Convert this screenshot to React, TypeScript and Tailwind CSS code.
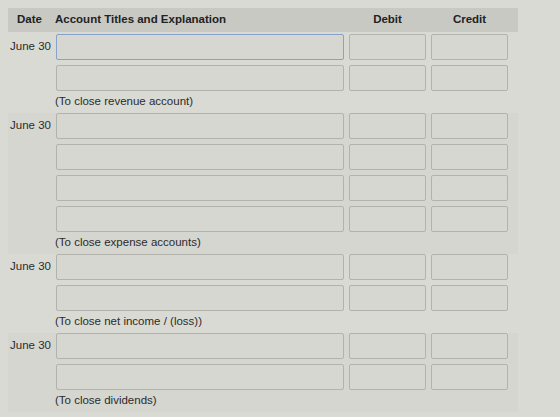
import React from "react";

type Group = {
  lines: number;
  note: string;
};

const groups: Group[] = [
  { lines: 2, note: "(To close revenue account)" },
  { lines: 4, note: "(To close expense accounts)" },
  { lines: 2, note: "(To close net income / (loss))" },
  { lines: 2, note: "(To close dividends)" },
];

const cols = "grid grid-cols-[43px_288px_77px_77px] gap-[5px]";

function Field({ focused }: { focused?: boolean }) {
  return (
    <input
      type="text"
      className={`h-[26px] w-full rounded-[2px] border bg-[#d7d7d2] px-1 text-[11px] outline-none ${
        focused ? "border-[#86a2c9]" : "border-[#b3b3ad]"
      }`}
    />
  );
}

function EntryGroup({ group, index }: { group: Group; index: number }) {
  const striped = index % 2 === 1;
  return (
    <div className={striped ? "bg-[#d6d6d1]" : ""}>
      <div className="flex flex-col gap-[5px]">
        {Array.from({ length: group.lines }).map((_, i) => (
          <div key={i} className={`${cols} items-center`}>
            <div className="pl-[2px] text-[11.5px] text-[#2b2b2b]">{i === 0 ? "June 30" : ""}</div>
            <Field focused={index === 0 && i === 0} />
            <Field />
            <Field />
          </div>
        ))}
      </div>
      <div className="flex h-[22px] items-center pl-[47px] text-[11.5px] text-[#2b2b2b]">{group.note}</div>
    </div>
  );
}

export default function App() {
  return (
    <div
      className="h-[417px] w-[560px] overflow-hidden bg-[#dadad5] px-2 pt-2"
      style={{ fontFamily: '"Liberation Sans", Arial, sans-serif' }}
    >
      <div className="w-[510px]">
        {/* column headings */}
        <div className={`${cols} h-[24px] items-center bg-[#c9c9c4] text-[11.5px] font-bold text-[#222]`}>
          <div className="text-center">Date</div>
          <div className="-ml-px">Account Titles and Explanation</div>
          <div className="text-center">Debit</div>
          <div className="text-center">Credit</div>
        </div>

        <div className="pt-[2px]">
          {groups.map((g, i) => (
            <EntryGroup key={i} group={g} index={i} />
          ))}
        </div>
      </div>
    </div>
  );
}
